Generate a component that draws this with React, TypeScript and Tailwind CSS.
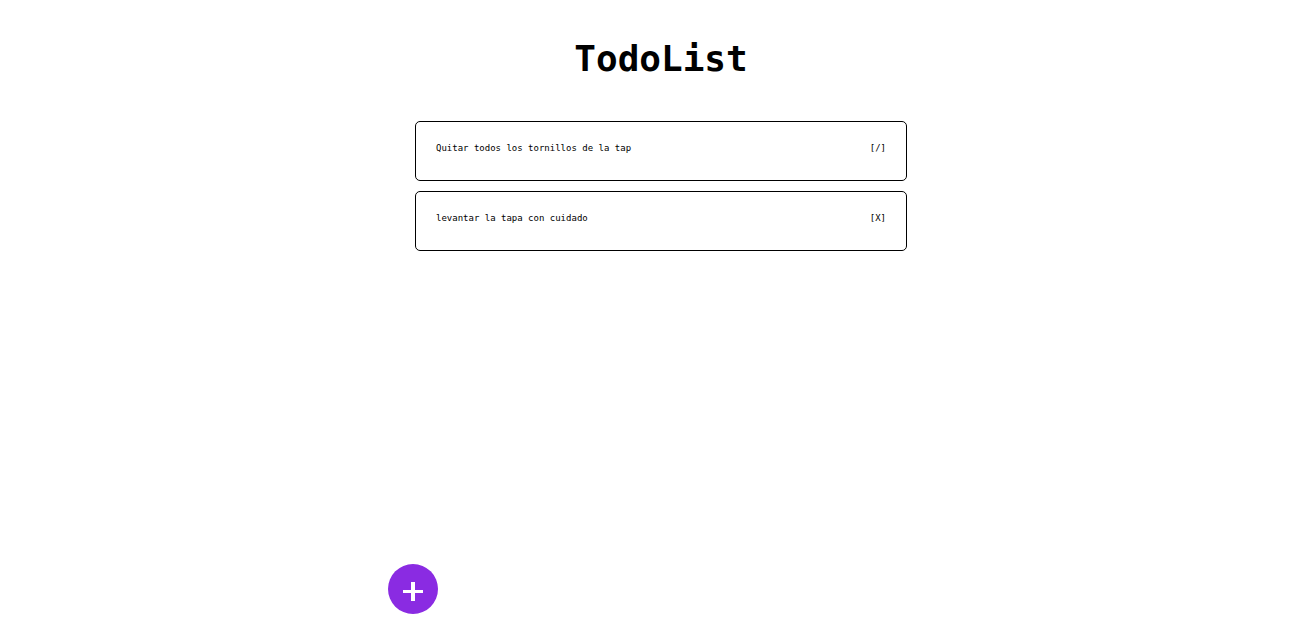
const todos = [
  { id: 1, text: "Quitar todos los tornillos de la tap", mark: "[/]" },
  { id: 2, text: "levantar la tapa con cuidado", mark: "[X]" },
];

export default function App() {
  return (
    <div className="flex min-h-screen flex-col bg-white pl-5 font-[Consolas,'DejaVu_Sans_Mono',monospace] text-black">
      <main className="mx-auto flex w-full max-w-[492px] flex-1 flex-col">
        <h1 className="mt-9 text-center text-[36px] leading-[45px] font-bold">TodoList</h1>
        <ul className="mt-10 flex flex-col gap-[10px]">
          {todos.map((todo) => (
            <li
              key={todo.id}
              className="flex min-h-[60px] items-start justify-between rounded-[5px] border border-black px-5 pt-[18px] text-[9px] leading-4"
            >
              <span>{todo.text}</span>
              <button type="button" aria-label={`Cambiar estado: ${todo.text}`}>
                {todo.mark}
              </button>
            </li>
          ))}
        </ul>
      </main>
      <button
        type="button"
        aria-label="Agregar tarea"
        className="fixed bottom-[11px] left-[calc(50%-263px)] flex size-[50px] items-center justify-center rounded-full bg-[#8a2be2] text-white"
      >
        <svg viewBox="0 0 50 50" className="size-[50px]" fill="currentColor" aria-hidden="true">
          <path d="M23 18h4v8h8v3h-8v8h-4v-8h-8v-3h8z" />
        </svg>
      </button>
    </div>
  );
}
